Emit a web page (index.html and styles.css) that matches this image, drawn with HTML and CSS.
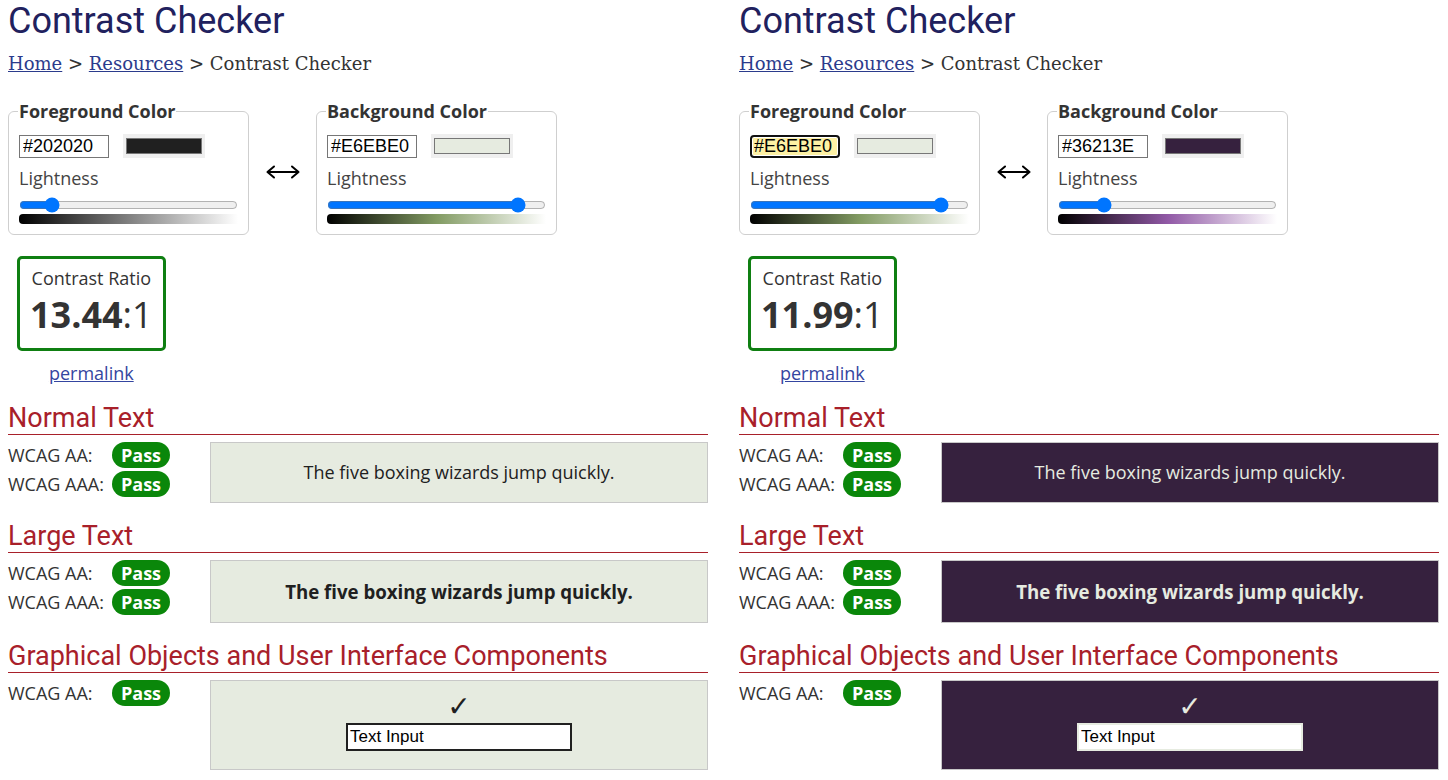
FILE: index.html
```html
<!DOCTYPE html>
<html lang="en">
<head>
<meta charset="utf-8">
<title>Contrast Checker</title>
<link rel="stylesheet" href="styles.css">
</head>
<body>
<div class="page">

  <section class="panel">
    <h1 class="title">Contrast Checker</h1>
    <nav class="crumbs"><a href="#">Home</a> &gt; <a href="#">Resources</a> &gt; Contrast Checker</nav>
    <div class="pickers">
      <fieldset class="picker">
        <legend>Foreground Color</legend>
        <div class="hexrow">
          <input class="hex" type="text" value="#202020">
          <div class="swatch"><div class="chip" style="background:#202020"></div></div>
        </div>
        <div class="lbl">Lightness</div>
        <input class="range" type="range" min="0" max="100" step="0.1" value="12.5">
        <div class="grad grad-gray"></div>
      </fieldset>
      <div class="swap" aria-label="swap colors"><svg width="34" height="14" viewBox="0 0 34 14"><path d="M1.5 7H32.5M8 1.5L1.5 7L8 12.5M26 1.5L32.5 7L26 12.5" fill="none" stroke="#000" stroke-width="2" stroke-linecap="round" stroke-linejoin="round"/></svg></div>
      <fieldset class="picker">
        <legend>Background Color</legend>
        <div class="hexrow">
          <input class="hex" type="text" value="#E6EBE0">
          <div class="swatch"><div class="chip" style="background:#E6EBE0"></div></div>
        </div>
        <div class="lbl">Lightness</div>
        <input class="range" type="range" min="0" max="100" step="0.1" value="90">
        <div class="grad grad-green"></div>
      </fieldset>
    </div>
    <div class="ratio-wrap">
      <div class="ratio">
        <div class="ratio-label">Contrast Ratio</div>
        <div class="ratio-val"><b>13.44</b>:1</div>
      </div>
      <a class="permalink" href="#">permalink</a>
    </div>

    <h2 class="sec">Normal Text</h2>
    <div class="results">
      <div class="checks">
        <div class="check"><span class="wcag">WCAG AA:</span><span class="pass">Pass</span></div>
        <div class="check"><span class="wcag">WCAG AAA:</span><span class="pass">Pass</span></div>
      </div>
      <div class="sample sample-normal theme-light">The five boxing wizards jump quickly.</div>
    </div>

    <h2 class="sec">Large Text</h2>
    <div class="results">
      <div class="checks">
        <div class="check"><span class="wcag">WCAG AA:</span><span class="pass">Pass</span></div>
        <div class="check"><span class="wcag">WCAG AAA:</span><span class="pass">Pass</span></div>
      </div>
      <div class="sample sample-large theme-light">The five boxing wizards jump quickly.</div>
    </div>

    <h2 class="sec">Graphical Objects and User Interface Components</h2>
    <div class="results">
      <div class="checks">
        <div class="check"><span class="wcag">WCAG AA:</span><span class="pass">Pass</span></div>
      </div>
      <div class="sample sample-graphic theme-light">
        <div class="tick">✓</div>
        <input class="demo-input" type="text" value="Text Input">
      </div>
    </div>
  </section>

  <section class="panel">
    <h1 class="title">Contrast Checker</h1>
    <nav class="crumbs"><a href="#">Home</a> &gt; <a href="#">Resources</a> &gt; Contrast Checker</nav>
    <div class="pickers">
      <fieldset class="picker">
        <legend>Foreground Color</legend>
        <div class="hexrow">
          <input class="hex hex-active" type="text" value="#E6EBE0">
          <div class="swatch"><div class="chip" style="background:#E6EBE0"></div></div>
        </div>
        <div class="lbl">Lightness</div>
        <input class="range" type="range" min="0" max="100" step="0.1" value="90">
        <div class="grad grad-green"></div>
      </fieldset>
      <div class="swap" aria-label="swap colors"><svg width="34" height="14" viewBox="0 0 34 14"><path d="M1.5 7H32.5M8 1.5L1.5 7L8 12.5M26 1.5L32.5 7L26 12.5" fill="none" stroke="#000" stroke-width="2" stroke-linecap="round" stroke-linejoin="round"/></svg></div>
      <fieldset class="picker">
        <legend>Background Color</legend>
        <div class="hexrow">
          <input class="hex" type="text" value="#36213E">
          <div class="swatch"><div class="chip" style="background:#36213E"></div></div>
        </div>
        <div class="lbl">Lightness</div>
        <input class="range" type="range" min="0" max="100" step="0.1" value="18.6">
        <div class="grad grad-purple"></div>
      </fieldset>
    </div>
    <div class="ratio-wrap">
      <div class="ratio">
        <div class="ratio-label">Contrast Ratio</div>
        <div class="ratio-val"><b>11.99</b>:1</div>
      </div>
      <a class="permalink" href="#">permalink</a>
    </div>

    <h2 class="sec">Normal Text</h2>
    <div class="results">
      <div class="checks">
        <div class="check"><span class="wcag">WCAG AA:</span><span class="pass">Pass</span></div>
        <div class="check"><span class="wcag">WCAG AAA:</span><span class="pass">Pass</span></div>
      </div>
      <div class="sample sample-normal theme-dark">The five boxing wizards jump quickly.</div>
    </div>

    <h2 class="sec">Large Text</h2>
    <div class="results">
      <div class="checks">
        <div class="check"><span class="wcag">WCAG AA:</span><span class="pass">Pass</span></div>
        <div class="check"><span class="wcag">WCAG AAA:</span><span class="pass">Pass</span></div>
      </div>
      <div class="sample sample-large theme-dark">The five boxing wizards jump quickly.</div>
    </div>

    <h2 class="sec">Graphical Objects and User Interface Components</h2>
    <div class="results">
      <div class="checks">
        <div class="check"><span class="wcag">WCAG AA:</span><span class="pass">Pass</span></div>
      </div>
      <div class="sample sample-graphic theme-dark">
        <div class="tick">✓</div>
        <input class="demo-input" type="text" value="Text Input">
      </div>
    </div>
  </section>

</div>
</body>
</html>
```

FILE: styles.css
```css
* { box-sizing: border-box; }

html, body {
  margin: 0;
  background: #fff;
}

body {
  font-family: "Open Sans", "DejaVu Sans", sans-serif;
  font-size: 18px;
  color: #333;
}

.page {
  display: grid;
  grid-template-columns: 700px 700px;
  column-gap: 31px;
  padding: 0 10px 0 8px;
}

.panel { min-width: 0; }

.title {
  margin: 1px 0 0;
  font-family: Roboto, sans-serif;
  font-weight: 400;
  font-size: 36px;
  line-height: 40px;
  color: #21215e;
}

.crumbs {
  margin-top: 11px;
  font-family: "DejaVu Serif", serif;
  font-size: 18px;
  line-height: 24px;
  color: #333;
}

.crumbs a {
  color: #2b3b8c;
  text-decoration: underline;
}

.pickers {
  display: flex;
  align-items: center;
  margin-top: 24px;
}

.picker {
  width: 241px;
  margin: 0;
  padding: 11px 10px 10px;
  border: 1px solid #cfcfcf;
  border-radius: 6px;
  min-width: 0;
}

.picker legend {
  padding: 0 1px;
  margin-left: -1px;
  font-weight: 700;
  font-size: 18px;
  line-height: 23px;
  color: #333;
}

.hexrow {
  display: flex;
  align-items: center;
  gap: 14px;
}

.hex {
  display: block;
  width: 90px;
  height: 23px;
  margin: 0;
  padding: 0 3px;
  border: 1px solid #767676;
  border-radius: 0;
  background: #fff;
  font-family: "Liberation Sans", Arial, sans-serif;
  font-size: 18px;
  color: #000;
  outline: none;
}

.hex-active {
  border: 2px solid #111;
  border-radius: 4px;
  padding: 0 2px;
  background: #fdf1a4;
  box-shadow: inset 0 0 0 1px #fff;
}

.swatch {
  width: 82px;
  height: 24px;
  padding: 4px 3px;
  background: #efefef;
}

.chip {
  height: 100%;
  border: 1px solid #777;
}

.lbl {
  margin-top: 8px;
  font-size: 18px;
  line-height: 25px;
  color: #444;
}

.range {
  display: block;
  width: 219px;
  height: 16px;
  margin: 6px 0 0;
}

.grad {
  height: 10px;
  margin-top: 1px;
  border-radius: 4px 0 0 4px;
}

.grad-gray   { background: linear-gradient(to right, #000, #808080, #fff); }
.grad-green  { background: linear-gradient(to right, #000, #829b63, #fff); }
.grad-purple { background: linear-gradient(to right, #000, #9159a6, #fff); }

.swap {
  width: 67px;
  display: flex;
  justify-content: center;
  padding: 8px 0 0 1px;
}

.swap svg { display: block; }

.ratio-wrap {
  display: flex;
  flex-direction: column;
  align-items: center;
  width: max-content;
  margin: 21px 0 0 9px;
}

.ratio {
  border: 3px solid #0f7f12;
  border-radius: 5px;
  padding: 7px 10px 9px;
  text-align: center;
}

.ratio-label {
  font-size: 18px;
  line-height: 25px;
  color: #333;
}

.ratio-val {
  font-size: 36px;
  line-height: 48px;
  color: #333;
}

.ratio-val b { font-weight: 700; }

.permalink {
  margin-top: 10px;
  font-size: 18px;
  line-height: 25px;
  color: #3445a0;
  text-decoration: underline;
}

.sec {
  margin: 17px 0 0;
  padding-bottom: 1px;
  font-family: Roboto, sans-serif;
  font-weight: 400;
  font-size: 27px;
  line-height: 30px;
  color: #a8202a;
  border-bottom: 1px solid #a8202a;
}

.sec + .results { margin-top: 7px; }
.results + .sec { margin-top: 18px; }

.results {
  display: flex;
  align-items: flex-start;
}

.checks {
  width: 202px;
  flex: none;
  display: flex;
  flex-direction: column;
  gap: 3px;
}

.check {
  display: flex;
  align-items: center;
  height: 26px;
}

.wcag {
  width: 104px;
  color: #333;
  font-size: 18px;
}

.pass {
  width: 58px;
  height: 26px;
  line-height: 26px;
  border-radius: 13px;
  background: #0a870a;
  color: #fff;
  font-weight: 700;
  font-size: 18px;
  text-align: center;
}

.sample {
  flex: 1;
  min-width: 0;
  border: 1px solid #c8c8c8;
  text-align: center;
}

.theme-light { background: #E6EBE0; color: #202020; }
.theme-dark  { background: #36213E; color: #E6EBE0; }

.sample-normal {
  padding: 17px 10px;
  font-size: 18px;
  line-height: 25px;
}

.sample-large {
  padding: 17px 10px;
  font-size: 18.67px;
  line-height: 27px;
  font-weight: 700;
}

.sample-graphic {
  display: flex;
  flex-direction: column;
  align-items: center;
  padding: 11px 0 18px;
}

.tick {
  font-family: "DejaVu Sans", sans-serif;
  font-size: 28px;
  line-height: 29px;
}

.demo-input {
  display: block;
  width: 226px;
  height: 28px;
  margin: 2px 0 0;
  padding: 0 2px;
  border: 2px solid #202020;
  border-radius: 0;
  background: #fff;
  font-family: "Liberation Sans", Arial, sans-serif;
  font-size: 17px;
  color: #000;
  outline: none;
}

.theme-dark .demo-input { border-color: #E6EBE0; }
```
